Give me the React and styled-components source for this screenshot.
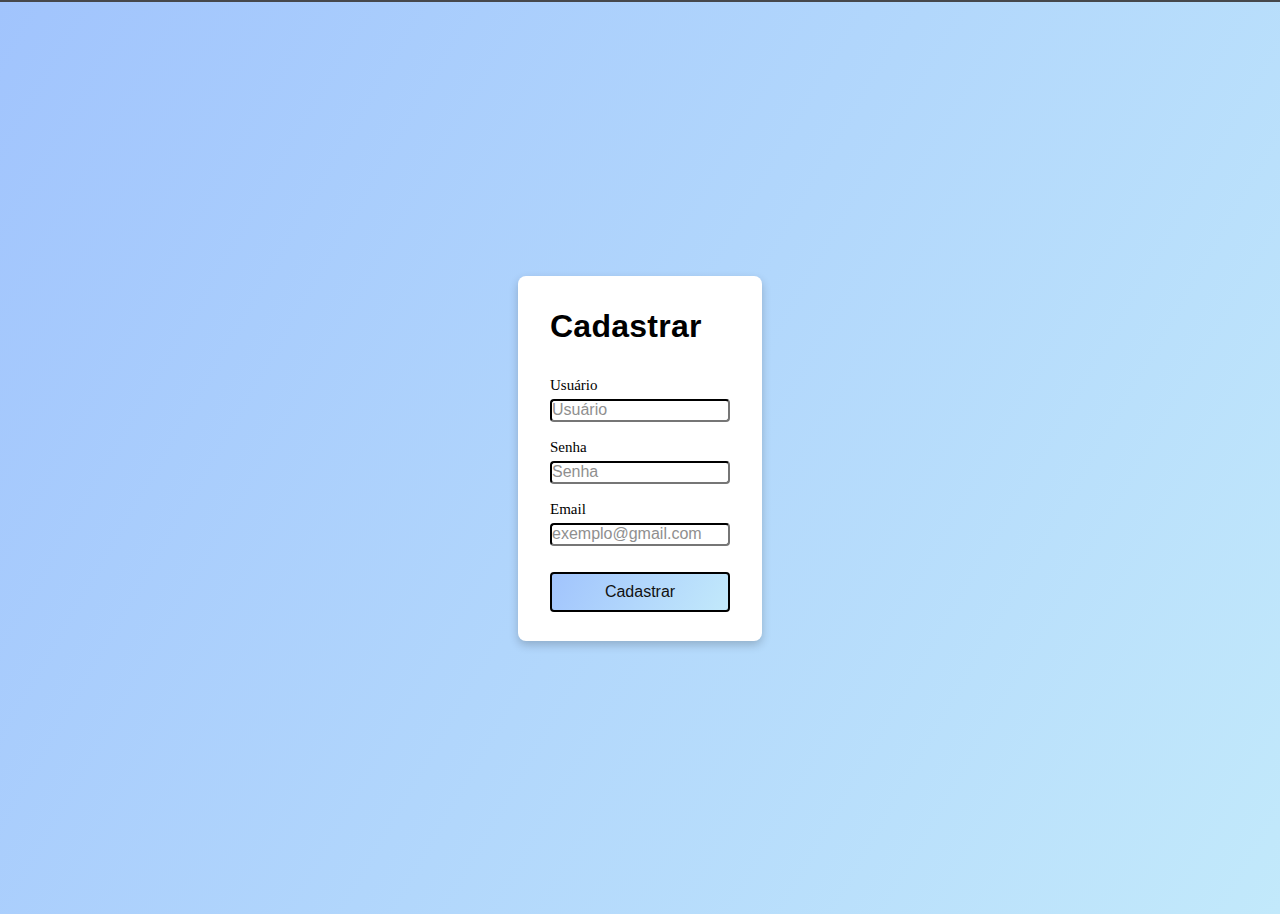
import React from "react";
import styled, { createGlobalStyle } from "styled-components";

const Global = createGlobalStyle`
  html, body { margin: 0; padding: 0; height: 100%; }
  body { font-family: "Liberation Serif", "Times New Roman", serif; }
  #root { height: 100%; }
`;

const Page = styled.div`
  height: 914px;
  display: flex;
  flex-direction: column;
  background: linear-gradient(120deg, #a1c4fd 0%, #c2e9fb 100%);
`;

const TopLine = styled.div`
  height: 2px;
  flex: none;
  background: #46484c;
`;

const Center = styled.main`
  flex: 1;
  display: flex;
  align-items: center;
  justify-content: center;
`;

const Card = styled.form`
  width: 244px;
  box-sizing: border-box;
  background: #fff;
  border-radius: 8px;
  padding: 32px 32px 29px;
  box-shadow: 0 4px 10px rgba(0, 0, 0, 0.2);
  display: flex;
  flex-direction: column;
`;

const Title = styled.h1`
  margin: 0 0 32px;
  font-family: "Liberation Sans", Arial, sans-serif;
  font-size: 32px;
  font-weight: bold;
  letter-spacing: 0.25px;
  color: #000;
`;

const Field = styled.div`
  display: flex;
  flex-direction: column;
  margin-bottom: ${(p) => (p.$last ? "26px" : "17px")};
`;

const Label = styled.label`
  font-family: "Liberation Serif", "Times New Roman", serif;
  font-size: 15px;
  line-height: 17px;
  color: #000;
  margin-bottom: 5px;
`;

const Input = styled.input`
  box-sizing: border-box;
  width: 180px;
  height: 23px;
  padding: 0;
  font-family: "Liberation Sans", Arial, sans-serif;
  font-size: 16px;
  color: #000;
  border: 2px inset #767676;
  border-top-color: #1f1f1f;
  border-left-color: #1f1f1f;
  border-bottom-color: #767676;
  border-right-color: #767676;
  border-radius: 4px;
  background: #fff;
  outline: none;
  &::placeholder { color: #8f8f8f; }
`;

const Button = styled.button`
  box-sizing: border-box;
  width: 180px;
  height: 40px;
  border: 2px solid #000;
  border-radius: 4px;
  background: linear-gradient(120deg, #a1c4fd 0%, #c2e9fb 100%);
  font-family: "Liberation Sans", Arial, sans-serif;
  font-size: 16px;
  color: #111;
  cursor: pointer;
`;

export default function App() {
  return (
    <>
      <Global />
      <Page>
        <TopLine />
        <Center>
          <Card onSubmit={(e) => e.preventDefault()}>
            <Title>Cadastrar</Title>
            <Field>
              <Label htmlFor="usuario">Usuário</Label>
              <Input id="usuario" type="text" placeholder="Usuário" />
            </Field>
            <Field>
              <Label htmlFor="senha">Senha</Label>
              <Input id="senha" type="password" placeholder="Senha" />
            </Field>
            <Field $last>
              <Label htmlFor="email">Email</Label>
              <Input id="email" type="email" placeholder="exemplo@gmail.com" />
            </Field>
            <Button type="submit">Cadastrar</Button>
          </Card>
        </Center>
      </Page>
    </>
  );
}
